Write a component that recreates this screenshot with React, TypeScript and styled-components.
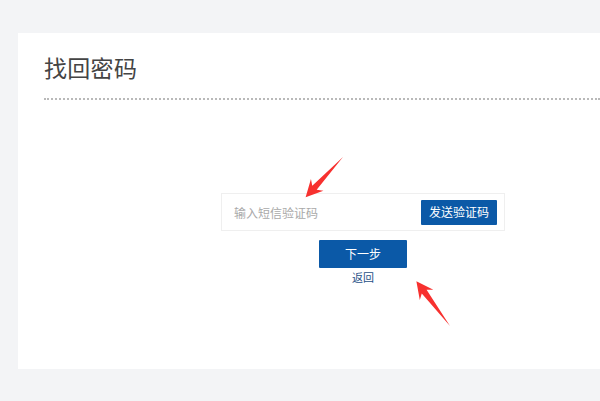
import React from 'react';
import styled, { createGlobalStyle } from 'styled-components';

const GlobalStyle = createGlobalStyle`
  html, body {
    margin: 0;
    padding: 0;
    background: #f3f4f6;
    overflow: hidden;
  }
  body {
    font-family: "Noto Sans CJK SC", "Noto Sans", sans-serif;
  }
`;

const Page = styled('div')`
  position: relative;
  width: 600px;
  height: 401px;
  padding: 33px 0 0 18px;
  box-sizing: border-box;
`;

const Card = styled('section')`
  width: 582px;
  height: 336px;
  background: #ffffff;
  padding: 0 0 0 26px;
  box-sizing: border-box;
`;

const Header = styled('header')`
  padding-top: 17px;
  height: 67px;
  border-bottom: 2px dotted #b9b9b9;
  box-sizing: border-box;
`;

const Title = styled('h1')`
  margin: 0;
  font-size: 23px;
  line-height: 34px;
  font-weight: 400;
  color: #444;
  letter-spacing: 0.3px;
`;

const Form = styled('div')`
  display: flex;
  flex-direction: column;
  align-items: center;
  width: 284px;
  margin: 93px 0 0 177px;
`;

const InputRow = styled('div')`
  display: flex;
  align-items: center;
  justify-content: space-between;
  width: 100%;
  height: 38px;
  border: 1px solid #efefef;
  box-sizing: border-box;
  padding: 0 7px 0 12px;
`;

const Input = styled('input')`
  flex: 1;
  min-width: 0;
  border: none;
  outline: none;
  font-family: inherit;
  font-size: 12px;
  color: #333;
  background: transparent;
  padding: 0;
  &::placeholder {
    color: #a9a9a9;
  }
`;

const Button = styled('button')<{ $wide?: boolean }>`
  font-family: inherit;
  background: #0b59a7;
  color: #fff;
  border: none;
  border-radius: 1px;
  padding: 0;
  font-size: 12px;
  width: ${(p) => (p.$wide ? '88px' : '76px')};
  height: ${(p) => (p.$wide ? '28px' : '25px')};
  line-height: 1;
  cursor: pointer;
`;

const NextButton = styled(Button)`
  margin-top: 9px;
`;

const BackLink = styled('a')`
  margin-top: 2px;
  font-size: 11px;
  line-height: 14px;
  color: #1e4f86;
  text-decoration: none;
`;

const Annotations = styled('svg')`
  position: absolute;
  left: 0;
  top: 0;
  pointer-events: none;
`;

function Arrow({ x, y, angle, length }: { x: number; y: number; angle: number; length: number }) {
  const L = length;
  const points = [
    [0, 0],
    [L - 13, -3],
    [L - 17, -8.5],
    [L, 0],
    [L - 17, 8.5],
    [L - 13, 3],
  ]
    .map((p) => p.join(','))
    .join(' ');
  return (
    <polygon
      points={points}
      fill="#f7312f"
      transform={`translate(${x} ${y}) rotate(${angle})`}
    />
  );
}

function App() {
  return (
    <Page>
      <GlobalStyle />
      <Card>
        <Header>
          <Title>找回密码</Title>
        </Header>
        <Form>
          <InputRow>
            <Input placeholder="输入短信验证码" />
            <Button>发送验证码</Button>
          </InputRow>
          <NextButton $wide>下一步</NextButton>
          <BackLink href="#">返回</BackLink>
        </Form>
      </Card>
      <Annotations width="600" height="401" viewBox="0 0 600 401">
        <Arrow x={343} y={157} angle={132.8} length={55} />
        <Arrow x={450} y={326} angle={-126.9} length={56} />
      </Annotations>
    </Page>
  );
}

export default App;
